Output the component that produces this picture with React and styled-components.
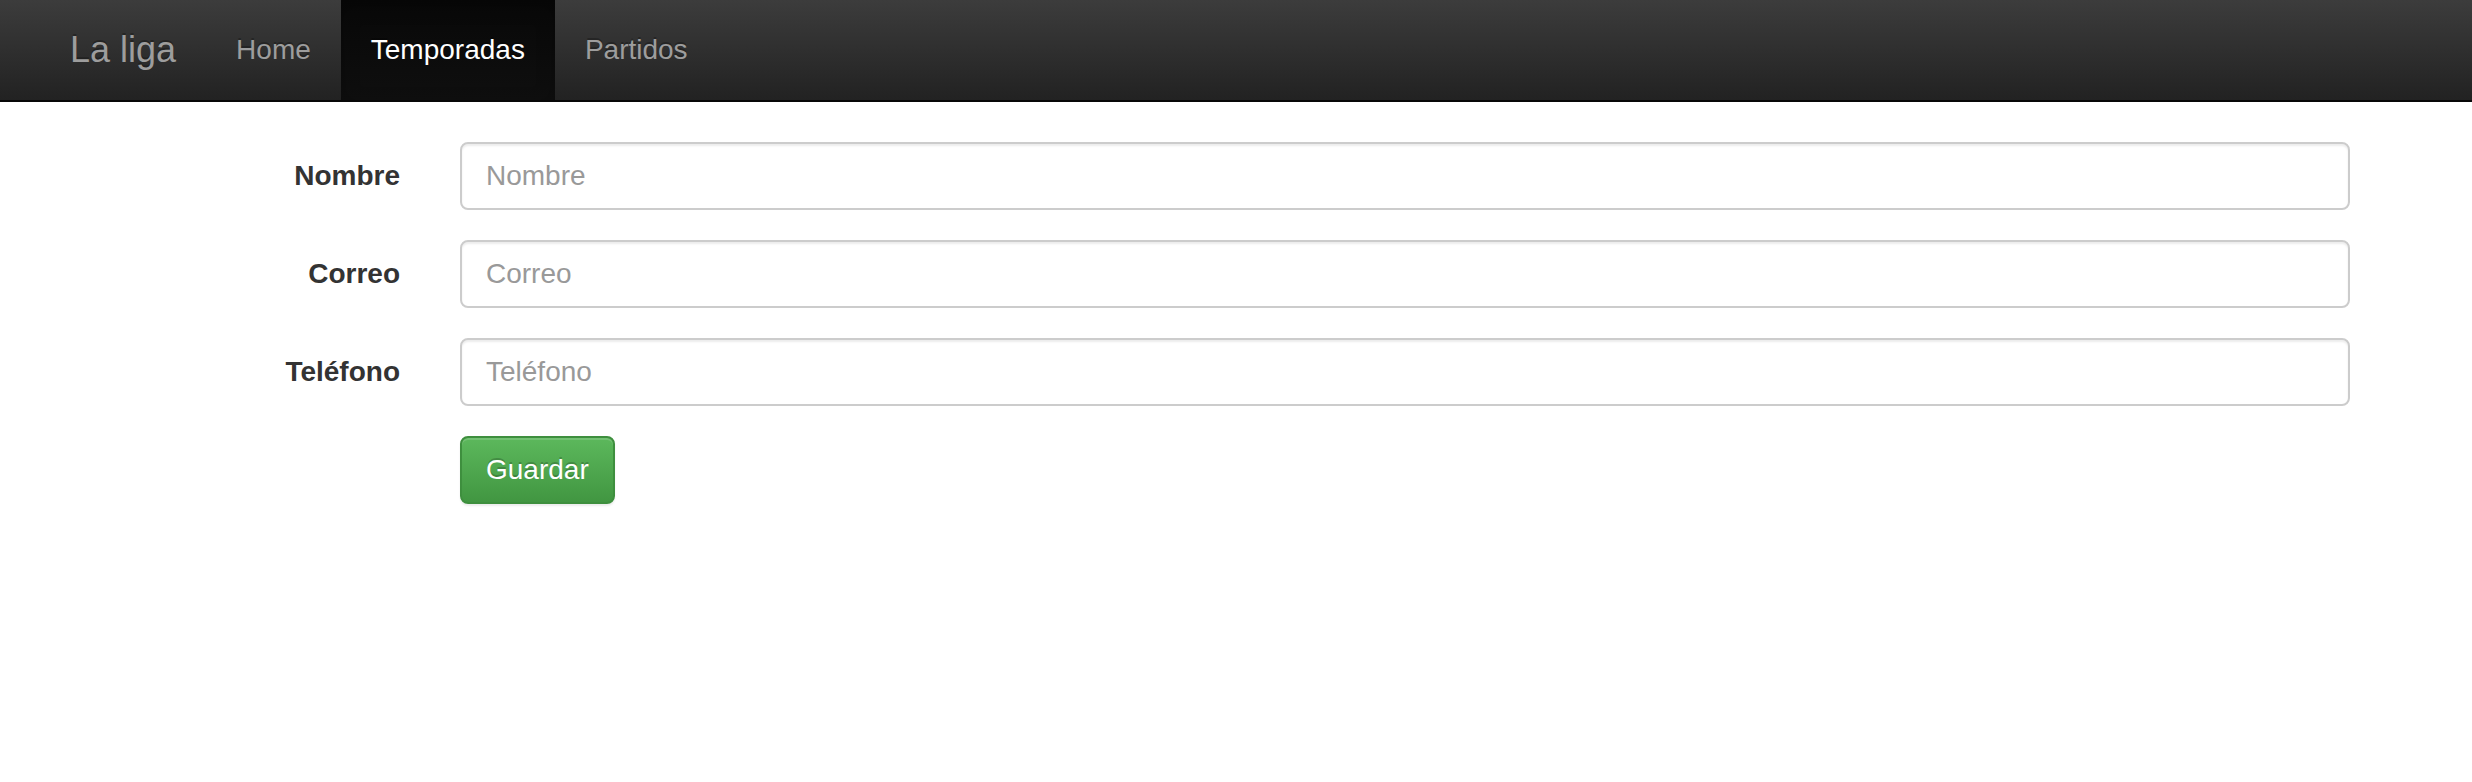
import React from 'react';
import styled, { createGlobalStyle } from 'styled-components';

const GlobalStyle = createGlobalStyle`
  * {
    box-sizing: border-box;
  }
  body {
    margin: 0;
    background: #fff;
    color: #333;
    font-family: "Liberation Sans", Arial, sans-serif;
    font-size: 28px;
    line-height: 1.42857;
  }
`;

const fields = [
  { id: 'nombre', label: 'Nombre' },
  { id: 'correo', label: 'Correo' },
  { id: 'telefono', label: 'Teléfono' },
];

function App() {
  return (
    <>
      <GlobalStyle />
      <Navbar>
        <Container>
          <Brand href="#">La liga</Brand>
          <Nav>
            <NavItem href="#">Home</NavItem>
            <NavItem href="#" $active>Temporadas</NavItem>
            <NavItem href="#">Partidos</NavItem>
          </Nav>
        </Container>
      </Navbar>

      <Container>
        <Form onSubmit={(e) => e.preventDefault()}>
          {fields.map((f) => (
            <FormGroup key={f.id}>
              <Label htmlFor={f.id}>{f.label}</Label>
              <Field>
                <Input id={f.id} type="text" placeholder={f.label} />
              </Field>
            </FormGroup>
          ))}
          <FormGroup>
            <span />
            <Field>
              <Button type="submit">Guardar</Button>
            </Field>
          </FormGroup>
        </Form>
      </Container>
    </>
  );
}

const Navbar = styled.nav`
  height: 102px;
  margin-bottom: 40px;
  background: linear-gradient(to bottom, #3c3c3c 0%, #222 100%);
  border-bottom: 2px solid #080808;
`;

const Container = styled.div`
  width: 2340px;
  margin-left: 40px;
  padding: 0 30px;
  display: flex;
`;

const Brand = styled.a`
  margin-left: -30px;
  padding: 30px;
  height: 100px;
  font-size: 36px;
  line-height: 40px;
  color: #9d9d9d;
  text-decoration: none;
  text-shadow: 0 -2px 0 rgba(0, 0, 0, 0.25);
`;

const Nav = styled.div`
  display: flex;
`;

const NavItem = styled.a`
  padding: 30px;
  height: 100px;
  font-size: 28px;
  line-height: 40px;
  text-decoration: none;
  text-shadow: 0 -2px 0 rgba(0, 0, 0, 0.25);
  color: ${(p) => (p.$active ? '#fff' : '#9d9d9d')};
  background: ${(p) =>
    p.$active ? 'linear-gradient(to bottom, #080808 0%, #0f0f0f 100%)' : 'transparent'};
  box-shadow: ${(p) => (p.$active ? 'inset 0 6px 18px rgba(0, 0, 0, 0.25)' : 'none')};
`;

const Form = styled.form`
  flex: 1;
  margin: 0 -30px;
`;

const FormGroup = styled.div`
  display: grid;
  grid-template-columns: 390px 1fr;
  margin-bottom: 30px;
`;

const Label = styled.label`
  padding: 14px 30px 0;
  text-align: right;
  font-weight: bold;
  color: #333;
`;

const Field = styled.div`
  padding: 0 30px;
`;

const Input = styled.input`
  display: block;
  width: 100%;
  height: 68px;
  padding: 12px 24px;
  font-family: inherit;
  font-size: 28px;
  line-height: 40px;
  color: #555;
  background: #fff;
  border: 2px solid #ccc;
  border-radius: 8px;
  box-shadow: inset 0 2px 2px rgba(0, 0, 0, 0.075);
  outline: none;

  &::placeholder {
    color: #999;
  }
`;

const Button = styled.button`
  padding: 12px 24px;
  height: 68px;
  font-family: inherit;
  font-size: 28px;
  line-height: 40px;
  color: #fff;
  text-shadow: 0 -2px 0 rgba(0, 0, 0, 0.2);
  background: linear-gradient(to bottom, #5cb85c 0%, #419641 100%);
  border: 2px solid #3e8f3e;
  border-radius: 8px;
  box-shadow: inset 0 2px 0 rgba(255, 255, 255, 0.15), 0 2px 2px rgba(0, 0, 0, 0.075);
  cursor: pointer;
`;

export default App;
